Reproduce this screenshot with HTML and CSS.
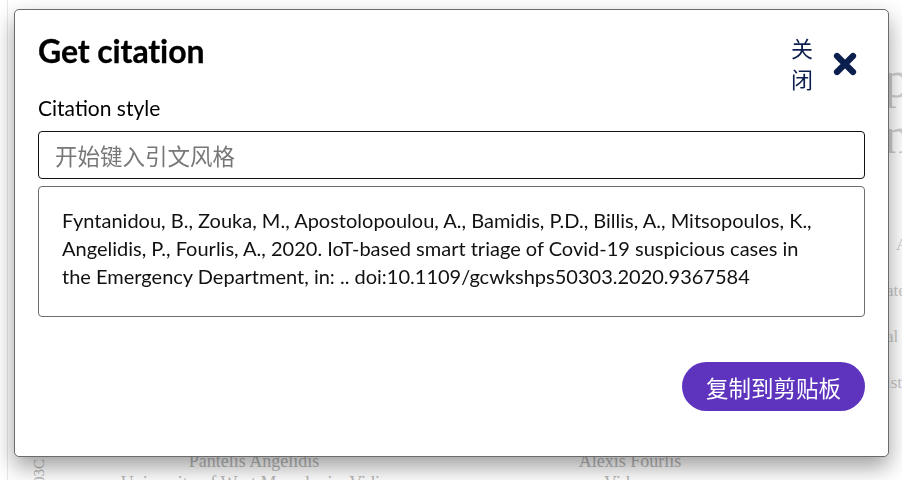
FILE: index.html
```html
<!DOCTYPE html>
<html lang="zh">
<head>
<meta charset="utf-8">
<title>Get citation</title>
<link rel="stylesheet" href="styles.css">
</head>
<body>
<div class="page">
  <div class="spacer"></div>
  <div class="doi-col"><span class="doi">03C</span></div>
  <main class="main">
    <div class="authors">
      <div class="author"><div class="author-name">Pantelis Angelidis</div><div class="author-aff">University of West Macedonia, Vidis</div></div>
      <div class="author"><div class="author-name">Alexis Fourlis</div><div class="author-aff">Vidavo</div></div>
    </div>
  </main>
  <aside class="edge">
    <div class="edge-big">p</div>
    <div class="edge-big">n</div>
    <div class="edge-small e1">A</div>
    <div class="edge-small">ate</div>
    <div class="edge-small">al</div>
    <div class="edge-small">ist</div>
  </aside>
</div>

<div class="modal" role="dialog" aria-labelledby="ttl">
  <div class="modal-head">
    <h2 class="title" id="ttl">Get citation</h2>
    <button class="close" type="button">
      <span class="close-label">关<br>闭</span>
      <svg class="close-icon" width="24" height="24" viewBox="0 0 24 24" aria-hidden="true">
        <path d="M4 4 L20 20 M20 4 L4 20" stroke="#0b1f4e" stroke-width="6.2" stroke-linecap="round" fill="none"/>
      </svg>
    </button>
  </div>
  <label class="field-label" for="style">Citation style</label>
  <input class="style-input" id="style" type="text" placeholder="开始键入引文风格">
  <div class="citation">Fyntanidou, B., Zouka, M., Apostolopoulou, A., Bamidis, P.D., Billis, A., Mitsopoulos, K., Angelidis, P., Fourlis, A., 2020. IoT-based smart triage of Covid-19 suspicious cases in<br>the Emergency Department, in: .. doi:10.1109/gcwkshps50303.2020.9367584</div>
  <div class="actions">
    <button class="copy" type="button">复制到剪贴板</button>
  </div>
</div>
</body>
</html>
```
FILE: styles.css
```css
* { box-sizing: border-box; }
html, body { margin: 0; padding: 0; background: #fff; }
body { width: 902px; height: 480px; overflow: hidden; font-family: "Lato", "Noto Sans CJK SC", sans-serif; }

/* background page */
.page {
  margin-left: 7px;
  height: 480px;
  border-left: 1px solid #e8e8e8;
  display: grid;
  grid-template-columns: 24px 16px 1fr 18px;
  font-family: "Liberation Serif", "Times New Roman", serif;
  color: #b8b8b8;
}
.doi-col { display: flex; align-items: flex-end; }
.doi { writing-mode: vertical-rl; transform: rotate(180deg); font-size: 15px; line-height: 14px; margin-bottom: -4px; }
.main { display: flex; flex-direction: column; justify-content: flex-end; }
.authors { margin-left: 18px; width: 752px; display: grid; grid-template-columns: 1fr 1fr; margin-bottom: -14px; }
.author { text-align: center; font-size: 18px; line-height: 22px; }
.edge { overflow: hidden; white-space: nowrap; padding-top: 52px; }
.edge-big { font-size: 52px; line-height: 56px; color: #cfcfcf; margin-left: 0; }
.edge-small { font-size: 17px; line-height: 46px; margin-left: 2px; color: #c8c8c8; }
.e1 { margin-top: 58px; margin-left: 12px; }

/* modal */
.modal {
  position: fixed;
  left: 14px;
  top: 9px;
  width: 875px;
  height: 448px;
  background: #fff;
  border: 1px solid #6b6b6b;
  border-radius: 5px;
  box-shadow: 0 10px 22px rgba(0, 0, 0, 0.38);
  padding: 0 23px;
  display: flex;
  flex-direction: column;
}
.modal-head { display: flex; justify-content: space-between; align-items: flex-start; padding-top: 22px; }
.title { margin: 0; font-size: 32px; font-weight: 700; line-height: 38px; color: #000; letter-spacing: -0.1px; -webkit-text-stroke: 0.3px #000; }
.close { display: flex; align-items: center; gap: 20px; background: none; border: 0; padding: 0; margin-top: 0; margin-right: 8px; cursor: pointer; }
.close-label { font-family: "Noto Sans CJK SC", sans-serif; font-size: 22px; line-height: 31px; color: #0b1f4e; text-align: left; }
.close-icon { display: block; margin-top: 2px; }
.field-label { margin-top: 1px; font-size: 21px; line-height: 26px; color: #000; }
.style-input {
  margin-top: 10px;
  height: 48px;
  width: 100%;
  border: 1px solid #111;
  border-radius: 4px;
  padding: 0 16px;
  font-family: "Noto Sans CJK SC", sans-serif;
  font-size: 22.5px;
  color: #222;
  outline: none;
}
.style-input::placeholder { color: #777; }
.citation {
  margin-top: 7px;
  height: 131px;
  border: 1px solid #6e6e6e;
  border-radius: 4px;
  padding: 19px 8px 0 23px;
  font-size: 20px;
  line-height: 28px;
  color: #111;
}
.actions { display: flex; justify-content: flex-end; margin-top: 45px; }
.copy {
  height: 49px;
  width: 183px;
  border: 0;
  border-radius: 25px;
  background: #5e34be;
  color: #fff;
  font-family: "Noto Sans CJK SC", sans-serif;
  font-size: 22.5px;
  padding: 0;
  cursor: pointer;
}
```
